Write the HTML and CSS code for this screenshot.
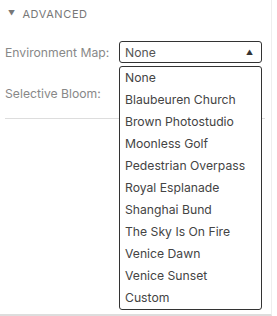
FILE: index.html
```html
<!DOCTYPE html>
<html lang="en">
<head>
    <meta charset="UTF-8">
    <title>Advanced</title>
    <link rel="stylesheet" href="styles.css">
</head>
<body>
    <div class="panel">
        <div class="section-title"><span class="caret">&#9660;</span> ADVANCED</div>

        <div class="row row-first">
            <label class="row-label">Environment Map:</label>
            <div class="select-wrap">
                <div class="select">
                    <span>None</span>
                    <span class="arrow">&#9650;</span>
                </div>
                <ul class="options">
                    <li>None</li>
                    <li>Blaubeuren Church</li>
                    <li>Brown Photostudio</li>
                    <li>Moonless Golf</li>
                    <li>Pedestrian Overpass</li>
                    <li>Royal Esplanade</li>
                    <li>Shanghai Bund</li>
                    <li>The Sky Is On Fire</li>
                    <li>Venice Dawn</li>
                    <li>Venice Sunset</li>
                    <li>Custom</li>
                </ul>
            </div>
        </div>

        <div class="row">
            <label class="row-label">Selective Bloom:</label>
        </div>

        <hr class="divider">
    </div>
</body>
</html>
```

FILE: styles.css
```css
body {
    margin: 0;
    background: #fff;
    font-family: Inter, "Liberation Sans", sans-serif;
    color: #333;
}
.panel {
    height: 316px;
    border-bottom: 2px solid #ddd;
    border-right: 1px solid #eee;
    width: 272px;
    padding: 0 0 0 5px;
    box-sizing: border-box;
}
.section-title {
    padding-top: 7px;
    height: 16px;
    font-size: 11px;
    letter-spacing: 0.6px;
    color: #777;
    padding-left: 3px;
}
.caret {
    font-size: 7px;
    vertical-align: 2px;
    margin-right: 3px;
}
.row {
    display: flex;
    align-items: center;
    height: 46px;
}
.row-first {
    margin-top: 11px;
    height: 36px;
}
.row-label {
    width: 114px;
    font-size: 12.2px;
    color: #888;
}
.select-wrap {
    position: relative;
}
.select {
    width: 143px;
    height: 22px;
    box-sizing: border-box;
    border: 1px solid #333;
    border-radius: 3px;
    display: flex;
    align-items: center;
    justify-content: space-between;
    padding: 0 8px 0 5px;
    font-size: 12.2px;
    color: #555;
}
.arrow {
    font-size: 7px;
    color: #333;
}
.options {
    position: absolute;
    left: 0;
    top: 25px;
    width: 143px;
    box-sizing: border-box;
    margin: 0;
    padding: 0;
    list-style: none;
    border: 1px solid #333;
    border-radius: 3px;
    background: #fff;
    z-index: 2;
}
.options li {
    height: 22px;
    line-height: 22px;
    padding-left: 5px;
    font-size: 12.2px;
    color: #444;
}
.divider {
    border: 0;
    border-top: 1px solid #ddd;
    margin: 2px 0 0;
    width: 260px;
}
```
